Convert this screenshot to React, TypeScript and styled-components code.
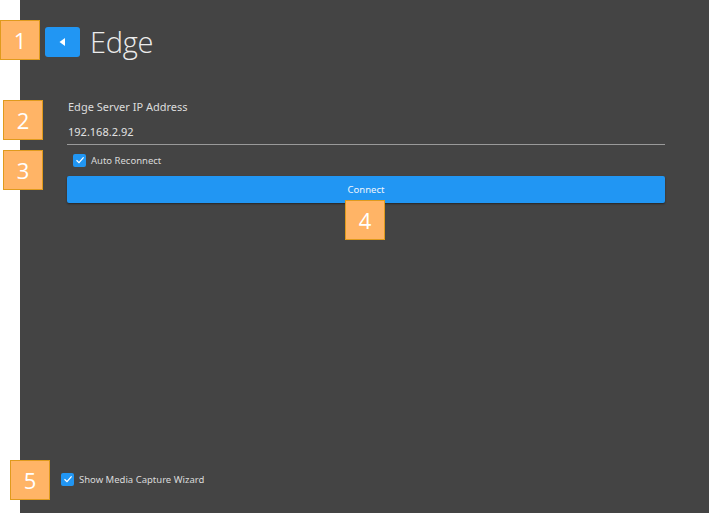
import React from 'react'
import styled, { createGlobalStyle } from 'styled-components'

const GlobalStyle = createGlobalStyle`
  html, body {
    margin: 0;
    padding: 0;
    background: #ffffff;
  }
  body {
    font-family: 'Noto Sans', 'Open Sans', sans-serif;
  }
`

const Screen = styled.div`
  position: relative;
  display: flex;
  width: 710px;
  height: 513px;
  overflow: hidden;
`

const Gutter = styled.div`
  width: 20px;
  flex: none;
  background: #ffffff;
`

const Panel = styled.div`
  display: flex;
  flex-direction: column;
  width: 689px;
  flex: none;
  padding: 27px 44px 27px 25px;
  box-sizing: border-box;
  background: #444444;
  color: #e4e4e4;
`

// 标题 - 返回按钮 + 页名
const Header = styled.div`
  display: flex;
  align-items: center;
  gap: 10px;
  height: 30px;
`

const BackButton = styled.button`
  display: flex;
  align-items: center;
  justify-content: center;
  width: 35px;
  height: 30px;
  padding: 0 2px 0 0;
  border: none;
  border-radius: 3px;
  background: #2196f3;
  cursor: pointer;
`

const Title = styled.h1`
  margin: 0;
  font-family: 'Open Sans', 'Noto Sans', sans-serif;
  font-weight: 300;
  font-size: 29px;
  line-height: 30px;
  color: #ececec;
  letter-spacing: -0.3px;
`

const Form = styled.div`
  display: flex;
  flex-direction: column;
  margin: 0 0 0 22px;
`

const FieldLabel = styled.label`
  margin-top: 42px;
  padding-left: 1px;
  font-size: 11px;
  line-height: 16px;
  color: #dcdcdc;
`

const TextInput = styled.input`
  box-sizing: border-box;
  height: 27px;
  margin-top: 3px;
  padding: 1px 0 0 1px;
  border: none;
  border-bottom: 1px solid #9a9a9a;
  background: transparent;
  color: #e2e2e2;
  font-family: 'Noto Sans', 'Open Sans', sans-serif;
  font-size: 11px;
  outline: none;
`

const Gap = styled.div<{ $h: number }>`
  height: ${(p) => p.$h}px;
  flex: none;
`

const CheckRow = styled.label<{ $indent?: number }>`
  display: flex;
  align-items: center;
  gap: 5px;
  height: 14px;
  padding-left: ${(p) => p.$indent ?? 0}px;
  font-size: 9.5px;
  color: #dadada;
  cursor: pointer;
`

const Box = styled.span`
  display: flex;
  align-items: center;
  justify-content: center;
  width: 13px;
  height: 13px;
  border-radius: 2px;
  background: #2196f3;
  flex: none;
`

const ConnectButton = styled.button`
  height: 27px;
  margin-top: 9px;
  border: none;
  border-radius: 2px;
  background: #2196f3;
  color: #eef5fc;
  font-family: 'Noto Sans', 'Open Sans', sans-serif;
  font-size: 9.5px;
  box-shadow: 0 1px 2px rgba(0, 0, 0, 0.45);
  cursor: pointer;
`

const Spacer = styled.div`
  flex: 1;
`

// 标注 - 编号方块
const Badge = styled.div<{ $x: number; $y: number }>`
  position: absolute;
  left: ${(p) => p.$x}px;
  top: ${(p) => p.$y}px;
  width: 40px;
  height: 40px;
  box-sizing: border-box;
  display: flex;
  align-items: center;
  justify-content: center;
  background: #ffb466;
  border: 1px solid #e09a1c;
  color: #ffffff;
  font-family: 'Open Sans', 'Noto Sans', sans-serif;
  font-size: 22px;
`

function Check () {
  return (
    <Box>
      <svg width='10' height='10' viewBox='0 0 10 10'>
        <path d='M1.5 5.2 L4 7.6 L8.6 2.4' fill='none' stroke='#ffffff' strokeWidth='1.3' />
      </svg>
    </Box>
  )
}

export default function App () {
  return (
    <>
      <GlobalStyle />
      <Screen>
        <Gutter />
        <Panel>
          <Header>
            <BackButton aria-label='Back'>
              <svg width='8' height='10' viewBox='0 0 8 10'>
                <path d='M7 1 L1.5 5 L7 9 Z' fill='#ffffff' />
              </svg>
            </BackButton>
            <Title>Edge</Title>
          </Header>
          <Form>
            <FieldLabel>Edge Server IP Address</FieldLabel>
            <TextInput defaultValue='192.168.2.92' />
            <Gap $h={8} />
            <CheckRow $indent={6}>
              <Check />
              Auto Reconnect
            </CheckRow>
            <ConnectButton>Connect</ConnectButton>
          </Form>
          <Spacer />
          <CheckRow $indent={16}>
            <Check />
            Show Media Capture Wizard
          </CheckRow>
        </Panel>
        <Badge $x={0} $y={20}>1</Badge>
        <Badge $x={3} $y={100}>2</Badge>
        <Badge $x={3} $y={150}>3</Badge>
        <Badge $x={345} $y={200}>4</Badge>
        <Badge $x={10} $y={460}>5</Badge>
      </Screen>
    </>
  )
}
